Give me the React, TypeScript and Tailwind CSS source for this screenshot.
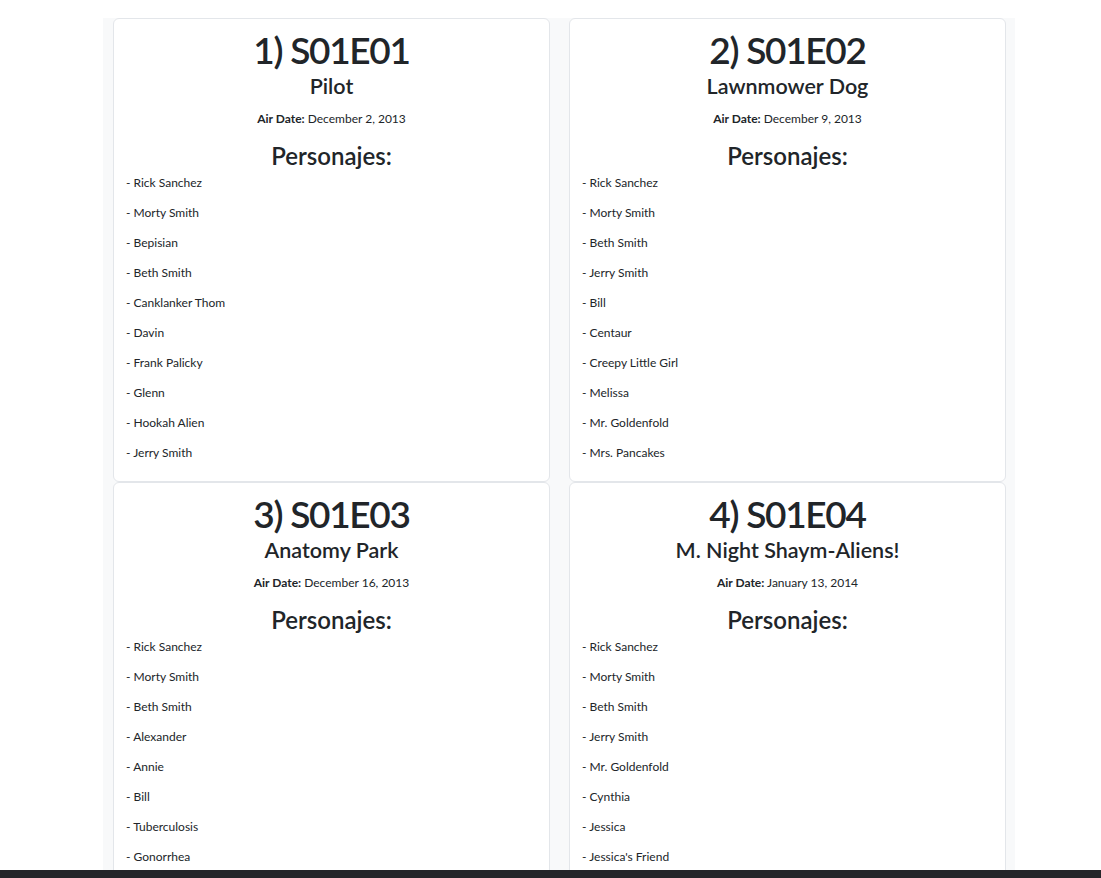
import React from "react";

type Episode = {
  num: number;
  code: string;
  name: string;
  airDate: string;
  characters: string[];
};

const episodes: Episode[] = [
  {
    num: 1,
    code: "S01E01",
    name: "Pilot",
    airDate: "December 2, 2013",
    characters: [
      "Rick Sanchez",
      "Morty Smith",
      "Bepisian",
      "Beth Smith",
      "Canklanker Thom",
      "Davin",
      "Frank Palicky",
      "Glenn",
      "Hookah Alien",
      "Jerry Smith",
    ],
  },
  {
    num: 2,
    code: "S01E02",
    name: "Lawnmower Dog",
    airDate: "December 9, 2013",
    characters: [
      "Rick Sanchez",
      "Morty Smith",
      "Beth Smith",
      "Jerry Smith",
      "Bill",
      "Centaur",
      "Creepy Little Girl",
      "Melissa",
      "Mr. Goldenfold",
      "Mrs. Pancakes",
    ],
  },
  {
    num: 3,
    code: "S01E03",
    name: "Anatomy Park",
    airDate: "December 16, 2013",
    characters: [
      "Rick Sanchez",
      "Morty Smith",
      "Beth Smith",
      "Alexander",
      "Annie",
      "Bill",
      "Tuberculosis",
      "Gonorrhea",
      "Hepatitis A",
      "Hepatitis C",
    ],
  },
  {
    num: 4,
    code: "S01E04",
    name: "M. Night Shaym-Aliens!",
    airDate: "January 13, 2014",
    characters: [
      "Rick Sanchez",
      "Morty Smith",
      "Beth Smith",
      "Jerry Smith",
      "Mr. Goldenfold",
      "Cynthia",
      "Jessica",
      "Jessica's Friend",
      "Kevin",
      "Mr. Goldenfold",
    ],
  },
];

function EpisodeCard({ ep }: { ep: Episode }) {
  return (
    <div className="bg-white border border-[#e3e6ea] rounded-[6px] px-3 pt-[8px] pb-[8px] text-[#212529]">
      <h1 className="text-center text-[37px] leading-[45px] font-semibold tracking-[-1.3px]">
        {ep.num}) {ep.code}
      </h1>
      <h4 className="text-center text-[21.5px] leading-[28px] font-semibold">
        {ep.name}
      </h4>
      <p className="text-center text-[12px] leading-[20px] mt-[9px]">
        <b className="font-bold">Air Date:</b> {ep.airDate}
      </p>
      <h3 className="text-center text-[24px] leading-[34px] font-semibold mt-[10px]">
        Personajes:
      </h3>
      <div>
        {ep.characters.map((c, i) => (
          <p key={i} className="text-[12px] leading-[20px] mb-[10px]">
            - {c}
          </p>
        ))}
      </div>
    </div>
  );
}

export default function App() {
  return (
    <div
      className="min-h-screen bg-white"
      style={{ fontFamily: 'Lato, "Open Sans", sans-serif' }}
    >
      <div className="ml-[103px] mt-[18px] w-[912px] bg-[#f8f9fa] pl-[10px] pr-[9px]">
        <div className="grid grid-cols-2 gap-x-[19px]">
          {episodes.map((ep) => (
            <EpisodeCard key={ep.num} ep={ep} />
          ))}
        </div>
      </div>
      <div className="fixed bottom-0 left-0 right-0 h-[8px] bg-[#25262a]" />
    </div>
  );
}
